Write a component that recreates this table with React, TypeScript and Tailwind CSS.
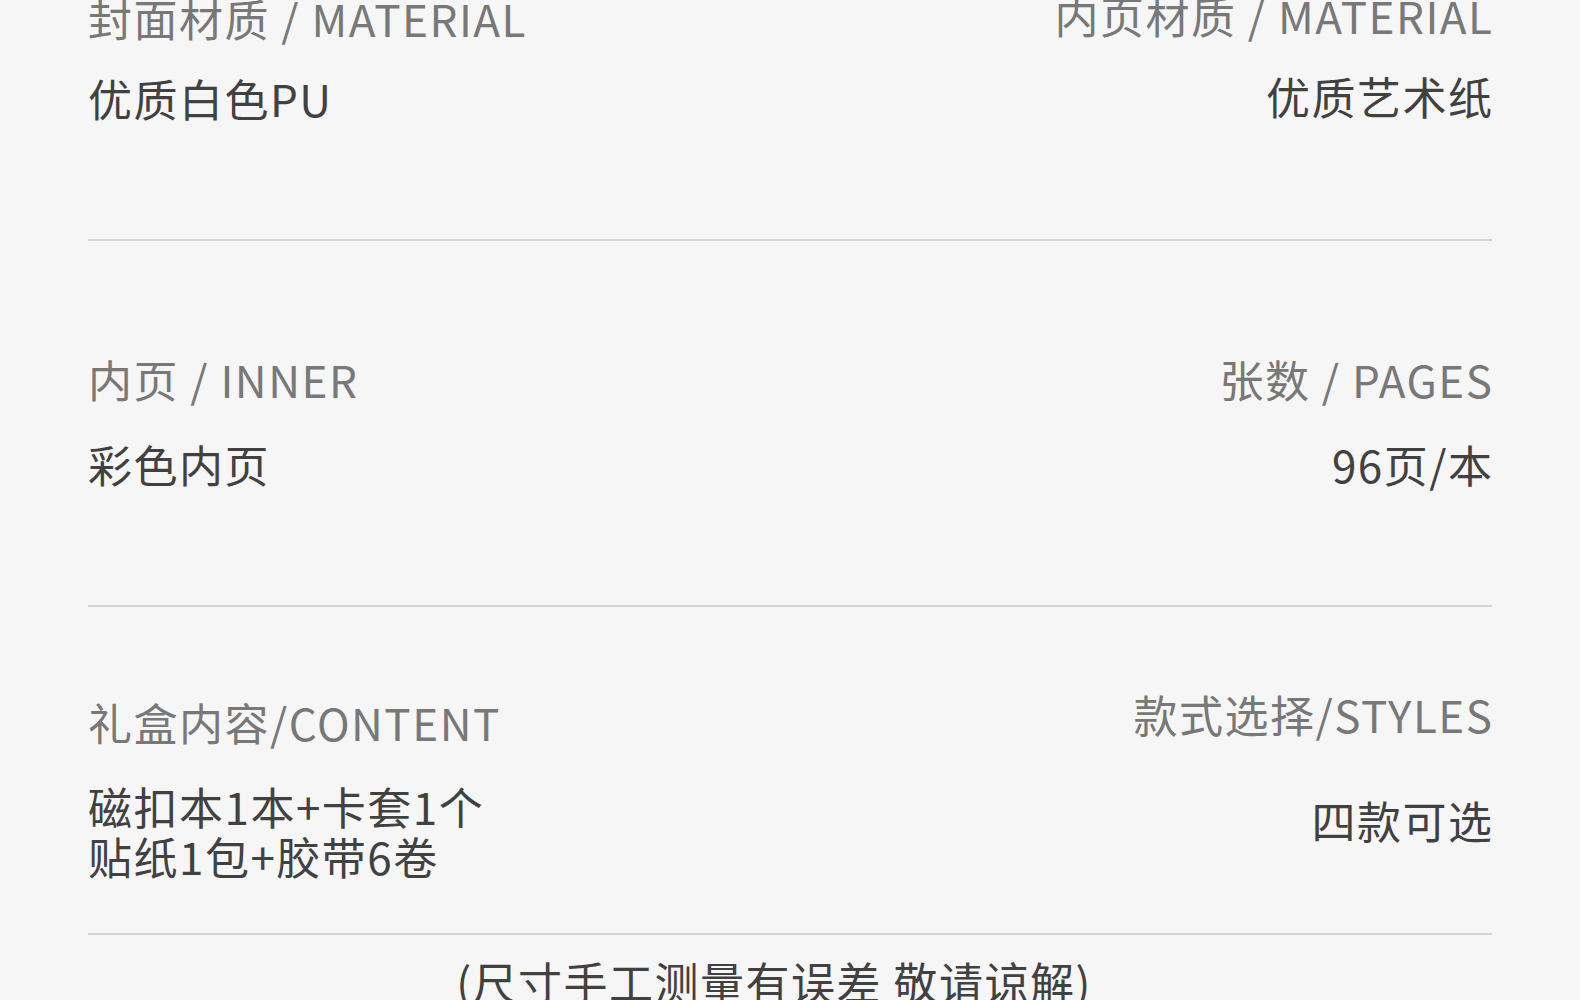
const label = "text-[#787878]";
const value = "text-[#414141]";

export default function App() {
  return (
    <div className="h-[1000px] overflow-hidden bg-[#f6f6f6] px-[88px] font-['Noto_Sans_CJK_SC','Noto_Sans',sans-serif] text-[44px] leading-[44px] tracking-[1.5px]">
      {/* 封面 / 内页材质 */}
      <section className="flex h-[239px] items-start justify-between">
        <div className="-mt-[4px]">
          <p className={label}>封面材质 / MATERIAL</p>
          <p className={"mt-[36px] " + value}>优质白色PU</p>
        </div>
        <div className="-mr-[1.5px] -mt-[7px] text-right">
          <p className={label}>内页材质 / MATERIAL</p>
          <p className={"mt-[37px] " + value}>优质艺术纸</p>
        </div>
      </section>
      <div className="h-[2px] bg-[#d3d3d3]" />

      {/* 内页 / 张数 */}
      <section className="flex h-[364px] items-start justify-between pt-[116px]">
        <div>
          <p className={label}>内页 / INNER</p>
          <p className={"mt-[41px] " + value}>彩色内页</p>
        </div>
        <div className="-mr-[1.5px] text-right">
          <p className={label}>张数 / PAGES</p>
          <p className={"mt-[41px] " + value}>96页/本</p>
        </div>
      </section>
      <div className="h-[2px] bg-[#d3d3d3]" />

      {/* 礼盒内容 / 款式 */}
      <section className="flex h-[326px] items-start justify-between">
        <div className="pt-[93px]">
          <p className={label}>礼盒内容/CONTENT</p>
          <div className={"mt-[37px] leading-[50px] " + value}>
            <p>磁扣本1本+卡套1个</p>
            <p>贴纸1包+胶带6卷</p>
          </div>
        </div>
        <div className="-mr-[1.5px] pt-[85px] text-right">
          <p className={label}>款式选择/STYLES</p>
          <p className={"mt-[62px] " + value}>四款可选</p>
        </div>
      </section>
      <div className="h-[2px] bg-[#d3d3d3]" />

      <div className="flex justify-center pr-[32px] pt-[24px]">
        <p className={value}>(尺寸手工测量有误差 敬请谅解)</p>
      </div>
    </div>
  );
}
